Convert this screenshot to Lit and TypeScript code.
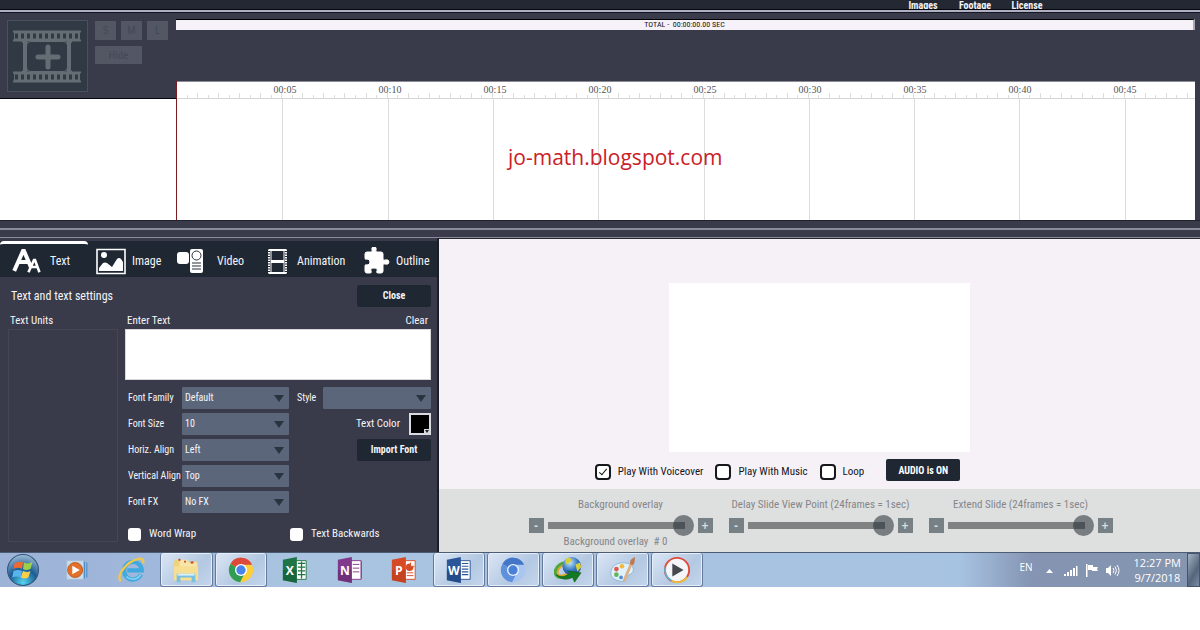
import { LitElement, html, svg, css } from "lit";
import { customElement, property } from "lit/decorators.js";

const NARROW = css`"Roboto Condensed", "Arial Narrow", "Liberation Sans", sans-serif`;

@customElement("editor-timeline")
class EditorTimeline extends LitElement {
  static styles = css`
    :host { display: block; font-family: ${NARROW}; }
    * { box-sizing: border-box; }
    .grid { display: grid; grid-template-columns: 176px 1fr 5px; background: #3a3b4a; }
    .left { display: flex; flex-direction: column; }
    .tools { height: 86px; padding: 7px 0 0 7px; display: flex; gap: 7px; align-items: flex-start; border-bottom: 1px solid #05060c; }
    .film { width: 81px; height: 72px; padding: 0; border: 1px solid #4b515c; background: #303944; }
    .film svg { display: block; width: 79px; height: 70px; }
    .keys { display: grid; grid-template-columns: repeat(3, 21px); column-gap: 5px; row-gap: 6px; padding-top: 1px; }
    .keys button { height: 19px; padding: 0; border: 0; background: #535764; color: #444955; font: 11px ${NARROW}; }
    .keys .wide { grid-column: span 2; height: 18px; }
    .tracks { flex: 1; background: #fff; }
    .right { display: flex; flex-direction: column; min-width: 0; }
    .total { height: 11px; margin-top: 6px; border-top: 1px solid #000; border-right: 2px solid #aaa8b0; background: #f7f1fa; color: #111; text-align: center; font-size: 8px; line-height: 10px; }
    .sheet { margin-top: 51px; background: #fff; border-left: 1px solid #7c1c1c; display: grid; grid-template-rows: 18px 121px; }
    .ruler { display: grid; border-bottom: 1px solid #d5d5d5; border-top: 1px solid #8b8b95; }
    .labels, .ticks { grid-area: 1 / 1; display: grid; }
    .labels { grid-template-columns: 3fr repeat(9, 6fr) 1fr; padding-left: 3px; font: 10px/15px "Liberation Serif", serif; color: #555; text-align: center; }
    .labels span:first-child { grid-column: 2; }
    .ticks { grid-template-columns: repeat(96, 3fr) 2fr; align-items: end; }
    .ticks i { height: 3px; border-right: 1px solid #ddd; }
    .ticks i:nth-child(even) { height: 5px; }
    .area { display: grid; }
    .cells, .note { grid-area: 1 / 1; }
    .cells { display: grid; grid-template-columns: repeat(9, 3fr) 2fr; }
    .cells i + i { border-left: 1px solid #dcdcdc; }
    .note { margin: 0; padding: 44px 0 0 331px; color: #cb2027; font: 21px/28px "Open Sans", sans-serif; }
    .split { height: 18px; border-top: 1px solid #20222c; background: #3a3b4a; display: grid; align-items: end; }
    .split i { height: 10px; border-top: 2px solid #8a8c9b; border-bottom: 1px solid #8a8c9b; }
  `;
  render() {
    const marks = ["00:05", "00:10", "00:15", "00:20", "00:25", "00:30", "00:35", "00:40", "00:45"];
    const holes = Array.from({ length: 11 }, (_, i) => 7 + i * 6);
    return html`
      <div class="grid">
        <div class="left">
          <div class="tools">
            <button class="film" aria-label="Add slide">
              <svg viewBox="0 0 79 70">
                <g fill="none" stroke="#646c74">
                  <path d="M5 10.500h68M5 19.500h68M5 51.500h68M5 60.500h68" stroke-width="2"/>
                  <path d="M6 15h66M6 56h66" stroke-width="8"/>
                  <path d="M17 20v31M61 20v31" stroke-width="4"/>
                  <path d="M14 20q3 1 3 5M14 51q3-1 3-5M64 20q-3 1-3 5M64 51q-3-1-3-5" stroke-width="2"/>
                  <rect x="18.500" y="20.500" width="41" height="30" rx="4"/>
                  <path d="M40 26v20M30 36h20" stroke-width="5" stroke-linecap="round"/>
                </g>
                <g fill="#303944">${holes.map((x) => svg`<path d="M${x} 12.500h3v5h-3zM${x} 53.500h3v5h-3z"/>`)}</g>
              </svg>
            </button>
            <div class="keys">
              <button>S</button><button>M</button><button>L</button>
              <button class="wide">Hide</button>
            </div>
          </div>
          <div class="tracks"></div>
        </div>
        <div class="right">
          <div class="total">TOTAL -&nbsp; 00:00:00.00 SEC</div>
          <div class="sheet">
            <div class="ruler">
              <div class="labels">${marks.map((m) => html`<span>${m}</span>`)}</div>
              <div class="ticks">${Array.from({ length: 96 }, () => html`<i></i>`)}</div>
            </div>
            <div class="area">
              <div class="cells">${Array.from({ length: 10 }, () => html`<i></i>`)}</div>
              <p class="note">jo-math.blogspot.com</p>
            </div>
          </div>
        </div>
      </div>
      <div class="split"><i></i></div>`;
  }
}

@customElement("text-panel")
class TextPanel extends LitElement {
  static styles = css`
    :host { display: block; background: #3a3b4a; color: #f4f5f9; font: 11px/16px ${NARROW}; border-right: 2px solid #1b1d27; }
    * { box-sizing: border-box; }
    button, select, input, textarea { font: inherit; color: inherit; margin: 0; }
    .tabs { display: grid; grid-template-columns: 88px 81px 90px 96px 1fr; height: 36px; margin-top: 3px; background: #1f2733; }
    .tab { display: flex; align-items: center; gap: 6px; padding: 0 0 0 8px; border: 0; border-top: 3px solid transparent; background: none; font-size: 12px; text-align: left; }
    .tab.on { padding-left: 12px; gap: 8px; border-top-color: #fff; border-radius: 4px 4px 0 0; }
    .tab.spread { gap: 10px; }
    .tab svg { width: 30px; height: 28px; flex: none; }
    .tab .slim { width: 24px; }
    .tab .piece { width: 27px; }
    .body { display: grid; grid-template-columns: 110px 306px; column-gap: 7px; padding: 8px 5px 10px 8px; }
    .title { grid-column: 1 / -1; display: flex; justify-content: space-between; align-items: center; padding-left: 3px; }
    h2 { margin: 0; font-size: 12px; font-weight: 400; }
    .dark { height: 22px; width: 74px; border: 0; border-radius: 2px; background: #1f2733; font-weight: 700; font-size: 10px; padding: 0; }
    .row { display: flex; justify-content: space-between; align-items: center; height: 22px; padding: 6px 3px 0 2px; }
    .link { border: 0; padding: 0; background: none; }
    .units { border: 1px solid #454654; }
    textarea { display: block; width: 306px; height: 51px; border: 1px solid #d8d8dc; background: #fff; color: #222; resize: none; }
    .fields { display: grid; grid-template-columns: 57px 107px 34px 1fr; grid-auto-rows: 22px; row-gap: 4px; align-items: center; margin-top: 7px; font-size: 10px; }
    .fields label { padding-left: 3px; white-space: nowrap; }
    .fields .style { padding-left: 8px; }
    .pick { display: grid; align-items: center; }
    .pick select { grid-area: 1 / 1; width: 100%; height: 22px; padding: 0 3px; border: 0; border-radius: 1px; appearance: none; background: #5c667b; }
    .pick svg { grid-area: 1 / 1; justify-self: end; width: 10px; height: 7px; margin-right: 5px; pointer-events: none; }
    .fields .color { grid-column: 3 / 5; grid-row: 2; justify-self: end; display: flex; align-items: center; gap: 9px; font-size: 11px; }
    .color input { width: 22px; height: 22px; padding: 0; border: 2px solid #d9dbe2; background: #000; appearance: none; }
    .color input::-webkit-color-swatch-wrapper { padding: 0; }
    .color input::-webkit-color-swatch { border: 0; }
    .color .swatch { display: grid; }
    .swatch input, .swatch svg { grid-area: 1 / 1; }
    .swatch svg { width: 6px; height: 5px; place-self: end; margin: 0 1px 1px 0; pointer-events: none; }
    .import { grid-column: 3 / 5; grid-row: 3; justify-self: end; }
    .checks { display: grid; grid-template-columns: 162px 1fr; padding: 13px 0 0 3px; }
    .checks label { display: flex; align-items: center; gap: 8px; }
    .checks input { appearance: none; width: 13px; height: 13px; border-radius: 3px; background: #fff; }
  `;
  pick(id: string, label: string, value: string, cls = "") {
    return html`<label class=${cls} for=${id}>${label}</label>
      <span class="pick"><select id=${id}><option>${value}</option></select>
      <svg viewBox="0 0 10 7"><path d="M0 0h10L5 7z" fill="#2a3340"/></svg></span>`;
  }
  render() {
    return html`
      <div class="tabs">
        <button class="tab on">
          <svg viewBox="0 0 30 28"><g fill="none" stroke="#fff" stroke-linecap="square"><path d="M3 22 11 4h1l6 14M8 15h7" stroke-width="4"/><path d="M17 24l5-11h1l4 11M19 20h6" stroke-width="2.600"/></g></svg>Text</button>
        <button class="tab">
          <svg viewBox="0 0 30 28"><path d="M1 2.500h28v24H1z" fill="#1f2733" stroke="#fff" stroke-width="1.600"/><circle cx="8" cy="8" r="3" fill="#fff"/><path d="M3 24v-3l4-5q2-1 4 0l5 4 5-8q2-2 4 0l2 3v9z" fill="#fff"/></svg>Image</button>
        <button class="tab spread">
          <svg viewBox="0 0 30 28"><rect y="5" width="12" height="12" rx="3" fill="#fff"/><rect x="13" y="2" width="13" height="24" rx="2" fill="#fff"/><g fill="none" stroke="#27303c"><circle cx="19.500" cy="8.500" r="4.500"/><path d="M15 16h9M15 19h9M15 22h9" stroke-width="1.200"/></g></svg>Video</button>
        <button class="tab">
          <svg class="slim" viewBox="0 0 24 28"><g fill="none" stroke="#fff"><path d="M2 2.500v24M19 2.500v24" stroke-dasharray="1.500 1" stroke-width="2"/><path d="M4 2v25M17 2v25"/><path d="M2 3h17M2 26h17" stroke-width="2"/><path d="M4 14.500h13" stroke-width="3"/></g></svg>Animation</button>
        <button class="tab">
          <svg class="piece" viewBox="1 0 27 28"><path d="M3 7q0-2 2-2h4q2 0 1-2-1-3 2-3t2 3q-1 2 1 2h4q2 0 2 2v5q0 2 2 1 4-1 4 2t-4 2q-2-1-2 1v6q0 2-2 2h-3q-2 0-1-2 1-3-3-3t-3 3q1 2-1 2H5q-2 0-2-2v-5q0-2 2-1 3 0 3-3t-3-3q-2 1-2-1z" fill="#fff" stroke="#fff" stroke-linejoin="round"/></svg>Outline</button>
      </div>
      <div class="body">
        <div class="title"><h2>Text and text settings</h2><button class="dark">Close</button></div>
        <div class="row"><span>Text Units</span></div>
        <div class="row"><label for="entry">Enter Text</label><button class="link">Clear</button></div>
        <div class="units"></div>
        <div>
          <textarea id="entry"></textarea>
          <div class="fields">
            ${this.pick("family", "Font Family", "Default")}
            ${this.pick("style", "Style", "", "style")}
            ${this.pick("size", "Font Size", "10")}
            <label class="color">Text Color<span class="swatch"><input type="color" value="#000000" /><svg viewBox="0 0 6 5"><path d="M0 0h6v5H0z" fill="#d9dbe2"/><path d="M1 1h4L3 4z" fill="#222"/></svg></span></label>
            ${this.pick("horiz", "Horiz. Align", "Left")}
            <button class="dark import">Import Font</button>
            ${this.pick("vert", "Vertical Align", "Top")}
            <span></span><span></span>
            ${this.pick("fx", "Font FX", "No FX")}
          </div>
          <div class="checks">
            <label><input type="checkbox" />Word Wrap</label>
            <label><input type="checkbox" />Text Backwards</label>
          </div>
        </div>
      </div>`;
  }
}

@customElement("frame-slider")
class FrameSlider extends LitElement {
  @property() label = "";
  @property() note = "";
  static styles = css`
    :host { display: block; width: 184px; color: #85868a; font: 11px/16px ${NARROW}; text-align: center; white-space: nowrap; }
    .line { display: flex; align-items: center; gap: 4px; margin-top: 2px; }
    button { width: 15px; height: 15px; padding: 0; border: 0; background: #778084; color: #d5d9da; font: 700 12px/14px "Liberation Sans", sans-serif; }
    input { appearance: none; flex: 1; min-width: 0; height: 21px; margin: 0; background: linear-gradient(#808183, #808183) center left / 138px 7px no-repeat; border-radius: 3px; }
    input::-webkit-slider-thumb { appearance: none; width: 21px; height: 21px; border-radius: 50%; background: linear-gradient(#4c5459, #4c5459) 0 50% / 12px 7px no-repeat, #777d80; }
    .note { line-height: 12px; padding-right: 10px; white-space: pre; }
  `;
  render() {
    return html`<label for="range">${this.label}</label>
      <div class="line"><button>-</button><input id="range" type="range" value="100" /><button>+</button></div>
      ${this.note ? html`<div class="note">${this.note}</div>` : ""}`;
  }
}

@customElement("preview-pane")
class PreviewPane extends LitElement {
  static styles = css`
    :host { display: flex; flex-direction: column; background: #f6f1f6; font: 11px/16px ${NARROW}; color: #15161a; border-top: 1px solid #22242e; }
    * { box-sizing: border-box; }
    .stage { flex: 1; display: flex; flex-direction: column; align-items: center; padding-top: 44px; }
    .screen { width: 301px; height: 169px; background: #fff; }
    .controls { display: flex; align-items: center; gap: 12px; padding: 7px 84px 7px 0; }
    label { display: flex; align-items: center; gap: 7px; padding-top: 4px; white-space: nowrap; }
    input { appearance: none; width: 16px; height: 16px; margin: 0; border: 2px solid #17181c; border-radius: 4px; background: #fff; display: grid; place-items: center; }
    input:checked::after { content: ""; width: 3px; height: 7px; margin-bottom: 2px; border: solid #111; border-width: 0 1px 1px 0; transform: rotate(40deg); }
    button { width: 74px; height: 22px; margin-left: 10px; padding: 0; border: 0; border-radius: 2px; background: #1f2733; color: #fff; font: 700 10px ${NARROW}; }
    .sliders { display: flex; justify-content: center; gap: 16px; height: 63px; padding: 8px 0 0 2px; background: #dedfdf; }
  `;
  render() {
    return html`
      <div class="stage">
        <div class="screen"></div>
        <div class="controls">
          <label><input type="checkbox" checked />Play With Voiceover</label>
          <label><input type="checkbox" />Play With Music</label>
          <label><input type="checkbox" />Loop</label>
          <button>AUDIO is ON</button>
        </div>
      </div>
      <div class="sliders">
        <frame-slider label="Background overlay" note="Background overlay  # 0"></frame-slider>
        <frame-slider label="Delay Slide View Point (24frames = 1sec)"></frame-slider>
        <frame-slider label="Extend Slide (24frames = 1sec)"></frame-slider>
      </div>`;
  }
}

const office = (color: string, dark: string, letter: string, page: unknown) => svg`
  <path d="M15 5h12v20H15z" fill="#fff" stroke="${color}"/>${page}
  <path d="M2 4 17 1v28L2 26z" fill="${color}"/><path d="M2 15v11l15 3V15z" fill="${dark}" opacity=".35"/>
  <text x="9.500" y="20" text-anchor="middle" fill="#fff" font-family="Open Sans, sans-serif" font-size="13" font-weight="700">${letter}</text>`;

@customElement("task-bar")
class TaskBar extends LitElement {
  static styles = css`
    :host { display: flex; justify-content: space-between; height: 35px; box-sizing: border-box; border-top: 1px solid #4d5c75; background: linear-gradient(90deg, #9cb2d6 0, #a0b8db 13%, #a8c4e0 24%, #a7c3e2 80%, #8494b2 86%, #8496b0 100%); font: 11px/15px "Open Sans", sans-serif; color: #fff; }
    * { box-sizing: border-box; }
    .apps { flex: 0 1 704px; display: grid; grid-template-columns: 50px repeat(12, 1fr); }
    button { display: grid; place-items: center; margin: 0 1px; padding: 0; border: 0; background: none; }
    button:first-child { justify-content: start; padding-left: 6px; }
    .open { border: 1px solid #66799a; border-top: 0; border-radius: 3px; background: linear-gradient(135deg, #dbe6f5, #b3c8e2 60%, #c4d6ec); box-shadow: inset 0 0 0 1px #e5eef9; }
    svg { width: 32px; height: 32px; }
    .app { width: 28px; height: 28px; }
    .tray { display: flex; align-items: center; gap: 6px; }
    .tray svg { width: 15px; height: 15px; }
    .lang { font-size: 10px; padding-right: 3px; align-self: start; padding-top: 7px; }
    .clock { text-align: center; padding: 0 0 0 8px; }
    .clock span { display: block; }
    .desk { width: 13px; height: 34px; margin: 0; border: 1px solid #45546c; background: linear-gradient(120deg, #a3b1c2, #55657c 60%, #7b8ba3); }
  `;
  render() {
    const lines = svg`<path d="M18 8h7M18 11h7M18 14h7M18 17h7M18 20h7" stroke="#2b579a" stroke-width="1.200"/>`;
    const icons: [string, boolean, unknown][] = [
      ["Start", false, svg`<defs><radialGradient id="orb" cx=".5" cy=".9" r=".9"><stop offset="0" stop-color="#54d6f2"/><stop offset=".5" stop-color="#1c5c94"/><stop offset="1" stop-color="#9fbdd6"/></radialGradient></defs><circle cx="15" cy="15" r="14.500" fill="url(#orb)" stroke="#33567c"/><path d="M7 9q4-3 8-1l-1 6q-4-2-8 0z" fill="#ee6a2e"/><path d="M16 8q4 2 8-1l-2 7q-4 2-7 0z" fill="#9bd04b"/><path d="M6 16q4-2 8 0l-1 6q-4-2-8 0z" fill="#58b4ee"/><path d="M15 16q4 2 7 0l-2 6q-3 2-7 0z" fill="#fbd048"/>`],
      ["Media Player", false, svg`<rect x="4" y="5" width="18" height="20" fill="#c9dced" stroke="#a9bfd4"/><path d="M23 6v18M25.500 7v16" stroke="#4f8fc8" stroke-width="1.200"/><circle cx="13" cy="15" r="8" fill="#e2702b" stroke="#c05a1c"/><path d="M10 10.500v9l8-4.500z" fill="#fff"/>`],
      ["Internet Explorer", false, svg`<path d="M24.500 20a9.500 9.500 0 1 1 1-4.500H10" fill="none" stroke="#3fa9e0" stroke-width="4.500"/><path d="M24 20a9.500 9.500 0 0 1-15 2" fill="none" stroke="#7fd0f2" stroke-width="2"/><path d="M3 27C-2 22 8 6 22 3q6-1 5 5" fill="none" stroke="#edc84d" stroke-width="2.500"/>`],
      ["Explorer", true, svg`<path d="M2 6l2-2h7l2 2h14v20H2z" fill="#efd27c"/><path d="M8 7l1-3h7l2 3h9v5H8z" fill="#f8e6a8"/><path d="M2 11h26v15H2z" fill="#f6df93"/><path d="M5 28V19h20v9h-4v-5H9v5z" fill="#79c1e2"/><path d="M6 20h18" stroke="#d8f2fa" stroke-width="2"/><path d="M7 4h2M13 6h2M20 7h3" stroke="#c8402c" stroke-width="2"/>`],
      ["Chrome", true, svg`<circle cx="15" cy="15" r="13" fill="#fbcf3a"/><path d="M15 15 3.700 8.500A13 13 0 0 1 27 9.500H15z" fill="#dd4a3b"/><path d="M3.700 8.500A13 13 0 0 0 14 28l5.500-10.500L15 15z" fill="#2f9e52"/><circle cx="15" cy="15" r="6.500" fill="#fff"/><circle cx="15" cy="15" r="5" fill="#4783ea"/>`],
      ["Excel", false, office("#1f7545", "#0c4a28", "X", svg`<path d="M18 8h8M18 12h8M18 16h8M18 20h8M22 6v18" stroke="#1f7545" stroke-width="1.400"/>`)],
      ["OneNote", false, office("#80398b", "#52205c", "N", svg`<path d="M18 9h7M18 13h7M18 17h7M27 6v18" stroke="#80398b"/>`)],
      ["PowerPoint", false, office("#d64a26", "#a53418", "P", svg`<circle cx="21" cy="12" r="4" fill="#d64a26"/><path d="M22 7v4h4M18 18h7M18 21h7" stroke="#d64a26" fill="#fff"/>`)],
      ["Word", true, office("#2b579a", "#173a6e", "W", lines)],
      ["Chromium", true, svg`<circle cx="15" cy="15" r="13" fill="#a9c6f2"/><path d="M15 15 3.700 8.500A13 13 0 0 1 27 9.500H15z" fill="#4476c8"/><path d="M3.700 8.500A13 13 0 0 0 14 28l5.500-10.500L15 15z" fill="#5e90dc"/><circle cx="15" cy="15" r="6.500" fill="#e9f1fc"/><circle cx="15" cy="15" r="5" fill="#4a80d6"/>`],
      ["Download Manager", true, svg`<defs><radialGradient id="globe" cx=".4" cy=".3" r=".8"><stop offset="0" stop-color="#c3e8f8"/><stop offset=".5" stop-color="#3c7dc4"/><stop offset="1" stop-color="#163a7a"/></radialGradient></defs><ellipse cx="10" cy="15" rx="9" ry="6.500" fill="none" stroke="#4fa83a" stroke-width="4" transform="rotate(-35 10 15)"/><ellipse cx="11" cy="15" rx="8" ry="5" fill="none" stroke="#dfa62b" stroke-width="2" transform="rotate(-35 11 15)"/><circle cx="19" cy="11" r="10" fill="url(#globe)"/><path d="M13 3q5-3 6 2l-5 4q-3-1-1-6zM23 9l5-2 1 5-4 5z" fill="#d7cf3b"/><path d="M2 20q9 5 15-2l-3-2 15 2-7 10-2-5q-10 5-18-3z" fill="#137a22" stroke="#0d5a1b" stroke-width=".6"/>`],
      ["Paint", true, svg`<path d="M3 17C4 8 15 5 24 9q6 5 1 10-4 1-4 4 0 5-8 4Q2 25 3 17z" fill="#dff1fa" stroke="#8fb6d1"/><circle cx="9" cy="14" r="2.500" fill="#e2574b"/><circle cx="15" cy="11" r="2.500" fill="#f0b93c"/><circle cx="9" cy="20" r="2.500" fill="#63b557"/><circle cx="14" cy="23" r="2" fill="#4c8fd4"/><path d="M17 27 25 8" stroke="#e0b083" stroke-width="3"/><path d="M24 9q-2-5 5-8 0 6-2 9z" fill="#bd7a52"/>`],
      ["Player", true, svg`<circle cx="15" cy="15" r="13" fill="#f4f5f8" stroke="#e04a38" stroke-width="2"/><path d="M2.500 12a13 13 0 0 0 6 14" fill="none" stroke="#58b4d8" stroke-width="2"/><path d="M9 26.500a13 13 0 0 0 17-4" fill="none" stroke="#eac040" stroke-width="2"/><path d="M10 8v14l12-7z" fill="#45484e"/>`],
    ];
    return html`
      <div class="apps">${icons.map(([name, open, art]) => html`
        <button class=${open ? "open" : ""} aria-label=${name}><svg class=${name === "Start" ? "" : "app"} viewBox="0 0 30 30">${art}</svg></button>`)}
      </div>
      <div class="tray">
        <span class="lang">EN</span>
        <svg viewBox="0 0 15 15"><path d="M4 10h7L7.500 6z" fill="#fff"/></svg>
        <svg viewBox="0 0 15 15"><path d="M1 13v-2h2v2zM4 13v-4h2v4zM7 13V7h2v6zM10 13V5h2v8zM13 13V3h1.500v10z" fill="#fff"/></svg>
        <svg viewBox="0 0 15 15"><path d="M2 1h1.500v13H2zM4 2h5v2h5l-1 2 1 2H8V7H4z" fill="#fff"/></svg>
        <svg viewBox="0 0 15 15"><path d="M1 5h2l3-3v11l-3-3H1z" fill="#fff"/><path d="M8 5q2 2.500 0 5M10 3.500q3 4 0 8M12 2q4 5.500 0 11" fill="none" stroke="#fff"/></svg>
        <div class="clock"><span>12:27 PM</span><span>9/7/2018</span></div>
        <button class="desk" aria-label="Show desktop"></button>
      </div>`;
  }
}

@customElement("app-root")
class AppRoot extends LitElement {
  static styles = css`
    :host { display: block; background: #fff; font-family: ${NARROW}; }
    .nav { display: grid; grid-template-columns: repeat(3, 52px); justify-content: end; align-items: end; height: 9px; overflow: hidden; padding-right: 147px; background: #232833; }
    .nav a { color: #f2f3f7; font-size: 10px; line-height: 12px; font-weight: 700; text-decoration: none; text-align: center; }
    .rule { height: 2px; border-top: 1px solid #06070d; border-bottom: 1px solid #14151e; background: #aeafc2; }
    .lower { display: grid; grid-template-columns: 439px 1fr; }
  `;
  render() {
    return html`
      <nav class="nav"><a href="#images">Images</a><a href="#footage">Footage</a><a href="#license">License</a></nav>
      <div class="rule"></div>
      <editor-timeline></editor-timeline>
      <main class="lower"><text-panel></text-panel><preview-pane></preview-pane></main>
      <task-bar></task-bar>`;
  }
}
